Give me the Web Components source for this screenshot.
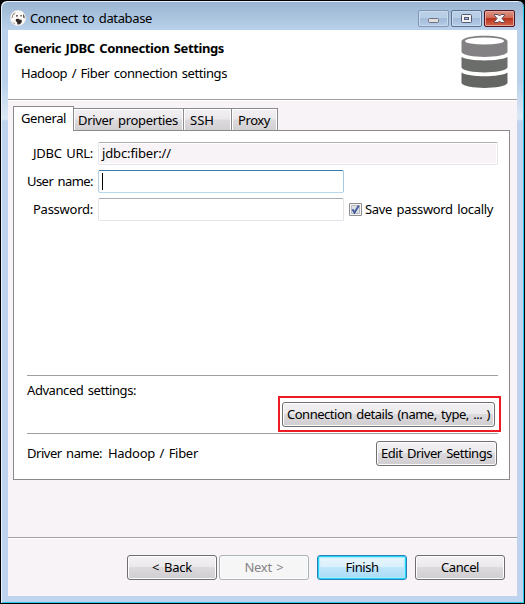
<!DOCTYPE html>
<html lang="en"><head><meta charset="utf-8"><title>Connect to database</title>
<style>
html,body{margin:0;width:525px;height:604px;overflow:hidden;background:#000}
body{font:13px/20px "Noto Sans","Open Sans",sans-serif;color:#000}
</style></head><body>
<db-dialog></db-dialog>
<script>
const define=(name,html,setup)=>customElements.define(name,class extends HTMLElement{
  connectedCallback(){
    if(this.shadowRoot)return;
    const t=document.createElement('template');t.innerHTML=html;
    this.attachShadow({mode:'open'}).append(t.content.cloneNode(true));
    if(setup)setup(this,this.shadowRoot);
  }
});

/* Text run whose tracking is adjusted to a given width */
define('fit-text',`<style>:host{display:inline-block;white-space:pre;height:20px;line-height:18px;word-spacing:1.5px;flex:none}span{display:inline-block}</style><span><slot></slot></span>`,(h,r)=>{
  const s=r.querySelector('span'),w=+h.getAttribute('w');
  const n=h.textContent.length;
  s.style.letterSpacing=((w-s.getBoundingClientRect().width)/n)+'px';
  h.style.width=w+'px';
});

define('push-button',`<style>
:host{display:flex;box-sizing:border-box;height:25px;border:1px solid #707070;border-radius:3px;box-shadow:inset 0 0 0 1px #fcfcfc;background:linear-gradient(#f3f1f3 0,#ebe9eb 48%,#dcdadc 50%,#cfcdcf 100%);align-items:center;justify-content:center;flex:none}
:host([disabled]){border-color:#adb2b5;background:#f7f6f7;color:#838383}
:host([primary]){border-color:#2c80b5;box-shadow:inset 0 0 0 1px #22d3fa,inset 0 0 1px 2px #a5ecfd;background:linear-gradient(#eaf6fd 0,#d9f0fc 48%,#bee6fd 50%,#a9dbf5 100%)}
</style><slot></slot>`);

define('window-button',`<style>
:host{display:block;box-sizing:border-box;width:31px;height:17px;border:1px solid #5c7090;border-radius:2px;box-shadow:inset 0 0 0 1px #c9dbef;background:linear-gradient(#b9cee7 0 46%,#a2bbd9 50%,#b6cde8)}
:host([kind=min]){border-color:#8295b3}
:host([kind=close]){border-color:#551621;box-shadow:inset 0 0 0 1px #e5a59a;background:linear-gradient(#dc9485 0,#cf6b56 46%,#b9321a 50%,#d2664a)}
svg{display:block}
</style><svg width="29" height="15" viewBox="0 0 29 15"></svg>`,(h,r)=>{
  r.querySelector('svg').innerHTML={
    min:'<rect x="9.5" y="7.5" width="10" height="4" rx="1" fill="#e2e0df" stroke="#69717e"/>',
    max:'<rect x="9.5" y="3.5" width="10" height="8" rx="1" fill="#f3f2f4" stroke="#505b72"/><rect x="12.5" y="6.5" width="4" height="2" fill="#a9c1de" stroke="#505b72"/>',
    close:'<path d="M9.500 3.500H13l1.500 1.500L16 3.500h3.500v1L17 7.500l2.500 3v1H16L14.500 10 13 11.500H9.500v-1L12 7.500l-2.500-3Z" fill="#f5f3f5" stroke="#5c4b5c"/>'
  }[h.getAttribute('kind')];
});

define('title-bar',`<style>
:host{display:flex;box-sizing:border-box;height:29px;padding:9px 9px 0 9px;align-items:flex-start}
svg{flex:none;margin-right:4px}
fit-text{margin-top:-1px}
.buttons{margin-left:auto;display:flex;gap:2px}
</style>
<svg width="16" height="16" viewBox="0 0 16 16"><circle cx="8" cy="8" r="7.800" fill="#fbf8f5"/><path d="M2 5.500Q3 2.800 5.600 2.200L4.600 4 3.200 5.200 2.800 7.500 1.500 8.500Z" fill="#988e86"/><path d="M6 5.300l1.800-.2-.2 1.400-1.300.2ZM10.300 5.200l1.300-.2.300 1.200-1.400.4Z" fill="#3b302b"/><path d="M13.200 3.800Q15 5.800 14.500 8.500L13.300 7.600ZM6 9l2.500-.2 1.500 1 1.600-.1.200 2.300-1.800 2.200-2.600.3-.2-2L5.700 11Z" fill="#342b27"/><path d="M2.200 11.500l2.600 1.700.7 1.300Q3.200 13.700 2.200 11.500Z" fill="#9a9088"/></svg>
<fit-text w="122">Connect to database</fit-text>
<div class="buttons"><window-button kind="min"></window-button><window-button kind="max"></window-button><window-button kind="close"></window-button></div>`);

define('wizard-header',`<style>
:host{display:flex;box-sizing:border-box;height:69px;background:#fff;padding:5px 9px 0 6px;justify-content:space-between}
.text{display:flex;flex-direction:column;padding-top:4px;gap:5px}
.title{font-weight:700}.sub{margin-left:7px}
svg{display:block}
</style><div class="text"><fit-text class="title" w="210">Generic JDBC Connection Settings</fit-text><fit-text class="sub" w="206">Hadoop / Fiber connection settings</fit-text></div>
<svg width="47" height="54" viewBox="0 0 47 54"><path d="M.5 6C3-1 44-1 46.500 6V17C43 23.500 4 23.500.5 17Z" fill="#838183"/><ellipse cx="23.500" cy="6" rx="19.500" ry="3.600" fill="#fff"/><path d="M.5 22C8 26.500 39 26.500 46.500 22V32.500C43 39 4 39 .5 32.500Z" fill="#6b6d6a"/><path d="M.5 37.500C8 42.500 39 42.500 46.500 37.500V48C43 54.500 4 54.500 .5 48Z" fill="#646663"/></svg>`);

define('tab-item',`<style>
:host{display:block;box-sizing:border-box;height:22px;border:solid #8c898c;border-width:1px 1px 0 0;box-shadow:inset 1px 1px #fff,inset -1px 0 #fff;background:linear-gradient(#f2f0f2 0,#eae8ea 48%,#dcdadc 52%,#d2d0d2);padding:1px 0 0 5px}
:host([selected]){height:25px;border-left-width:1px;background:#fff;padding:1px 0 0 7px;margin-bottom:-1px;position:relative}
</style><slot></slot>`);

define('text-field',`<style>
:host{display:flex;box-sizing:border-box;height:23px;border:1px solid #e3e3ea;border-top-color:#abadb3;border-radius:2px;background:#fff;padding:0 3px;align-items:center}
:host([readonly]){background:#f7f3f7;box-shadow:inset 0 0 0 1px #fff}
:host([focused]){border-color:#3d7bad #a4c9e3 #b7d9ed #b5cfe7}
:host([focused])::before{content:"";width:1px;height:17px;background:#000}
</style><slot></slot>`);

define('check-box',`<style>
:host{display:flex;align-items:center;gap:3px}
svg{flex:none}
</style><svg width="13" height="13" viewBox="0 0 13 13"><path d="M.5.5h12v12H.5Z" fill="#f4f4f4" stroke="#8e8f8f"/><path d="M2.500 2.500h8v8h-8Z" fill="#dce0e5" stroke="#b5bac2"/><path d="M3.500 6.200l2 3.500L9.800 2.600" fill="none" stroke="#405a9a" stroke-width="1.900"/></svg><slot></slot>`);

define('settings-page',`<style>
:host{display:flex;flex-direction:column;box-sizing:border-box;height:350px;border:1px solid #8c898c;background:#fff;padding:11px 11px 0 13px}
.form{display:grid;grid-template-columns:66px 246px auto;column-gap:5px;row-gap:5px;align-items:center;justify-items:end}
.form text-field{width:100%;justify-self:stretch}.wide{grid-column:2/4}
.form .field{width:246px}
check-box{justify-self:start}
.line{height:1px;background:#a0a0a0;flex:none}
.first{margin-top:154px}
.advanced{display:flex;flex-direction:column;height:57px;box-sizing:border-box;padding-top:5px;flex:none}
.highlight{box-sizing:border-box;width:223px;height:36px;border:2px solid #ed1c24;align-self:flex-end;margin:-5px -3px 0 0;padding:4px 2px}
.driver{display:flex;align-items:center;padding-top:7px;gap:6px}
.driver push-button{margin-left:auto;width:121px;margin-right:1px}
</style>
<div class="form">
<fit-text w="60">JDBC URL:</fit-text><text-field readonly class="wide"><fit-text w="69">jdbc:fiber://</fit-text></text-field>
<fit-text w="66">User name:</fit-text><text-field focused class="field"></text-field><span></span>
<fit-text w="60">Password:</fit-text><text-field class="field"></text-field><check-box><fit-text w="128">Save password locally</fit-text></check-box>
</div>
<div class="line first"></div>
<div class="advanced"><fit-text w="109">Advanced settings:</fit-text><div class="highlight"><push-button style="width:213px"><fit-text w="203">Connection details (name, type, ... )</fit-text></push-button></div></div>
<div class="line"></div>
<div class="driver"><fit-text w="75">Driver name:</fit-text><fit-text w="90">Hadoop / Fiber</fit-text><push-button><fit-text w="111">Edit Driver Settings</fit-text></push-button></div>`);

define('tab-folder',`<style>
:host{display:block;padding:5px 7px 0 5px}
.tabs{display:flex;align-items:flex-end;height:24px}
.inset{padding-left:6px}
</style><div class="tabs"><tab-item selected style="width:61px"><fit-text w="45">General</fit-text></tab-item><tab-item style="width:110px;padding-left:4px"><fit-text w="100">Driver properties</fit-text></tab-item><tab-item class="inset" style="width:48px"><fit-text w="24">SSH</fit-text></tab-item><tab-item class="inset" style="width:46px"><fit-text w="32">Proxy</fit-text></tab-item></div><settings-page></settings-page>`);

define('button-bar',`<style>
:host{display:flex;box-sizing:border-box;height:59px;border-top:1px solid #a0a0a0;box-shadow:inset 0 1px #fff;padding:17px 12px 0 0;justify-content:flex-end}
push-button{width:90px}.next{margin:0 8px 0 2px}.cancel{margin-left:8px}
</style><push-button><fit-text w="40">&lt; Back</fit-text></push-button><push-button disabled class="next"><fit-text w="39">Next &gt;</fit-text></push-button><push-button primary><fit-text w="33">Finish</fit-text></push-button><push-button class="cancel"><fit-text w="38">Cancel</fit-text></push-button>`);

define('db-dialog',`<style>
:host{display:block;box-sizing:border-box;width:525px;height:604px;border:1px solid #000;border-radius:7px 7px 0 0;background:linear-gradient(#99b4d1 0,#b9d1ea 29px,#b9d1ea 80px,#dce8f5 118px,#bfd3ee 120px);box-shadow:inset 1px 1px #e6f1fb,inset -1px -1px #27c5e9;padding:0 7px 7px}
title-bar{margin:0 -7px}
.client{display:flex;flex-direction:column;height:566px;background:#f7f3f7}
wizard-header{flex:none}
.rule{height:1px;background:#a0a0a0;border-bottom:1px solid #fff;flex:none}
button-bar{margin-top:auto}
</style><title-bar></title-bar><div class="client"><wizard-header></wizard-header><div class="rule"></div><tab-folder></tab-folder><button-bar></button-bar></div>`);
</script></body></html>
